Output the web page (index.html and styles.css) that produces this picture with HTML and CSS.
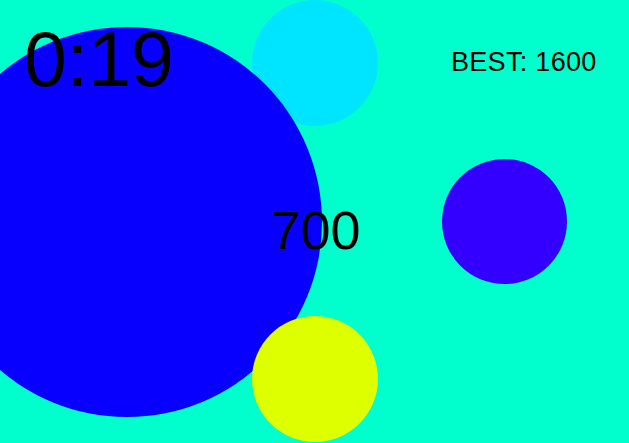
FILE: index.html
```html
<!DOCTYPE html>
<html lang="en">
<head>
    <meta charset="UTF-8">
    <meta name="viewport" content="width=device-width, initial-scale=1.0">
    <title>Bubble Pop</title>
    <link rel="stylesheet" href="styles.css">
</head>
<body>
    <div class="stage">
        <!-- bubbles, drawn back to front -->
        <div class="bubble cyan"></div>
        <div class="bubble blue"></div>
        <div class="bubble yellow"></div>
        <div class="bubble purple"></div>

        <div class="timer">0:19</div>
        <div class="best">BEST: 1600</div>
        <div class="score">700</div>
    </div>
</body>
</html>
```

FILE: styles.css
```css
body {
    margin: 0;
    padding: 0;
    background-color: #00ffcc;
    font-family: 'Liberation Sans', Arial, sans-serif;
    color: #000;
    overflow: hidden;
}

.stage {
    position: relative;
    width: 629px;
    height: 443px;
    overflow: hidden;
}

.bubble {
    position: absolute;
    border-radius: 50%;
}

.cyan {
    left: 252px;
    top: 0px;
    width: 126px;
    height: 126px;
    background-color: #00e5ff;
}

.blue {
    left: -68px;
    top: 27px;
    width: 390px;
    height: 390px;
    background-color: #0800ff;
}

.yellow {
    left: 252px;
    top: 316px;
    width: 126px;
    height: 126px;
    background-color: #ddff00;
}

.purple {
    left: 442px;
    top: 159px;
    width: 125px;
    height: 125px;
    background-color: #3300ff;
}

.timer,
.best,
.score {
    position: absolute;
    line-height: 1;
    white-space: nowrap;
}

.timer {
    left: 24px;
    top: 21px;
    font-size: 77px;
}

.best {
    left: 451px;
    top: 49px;
    font-size: 27px;
    letter-spacing: 0.3px;
}

.score {
    left: 0;
    width: 631px;
    top: 203px;
    font-size: 54px;
    text-align: center;
}
```
